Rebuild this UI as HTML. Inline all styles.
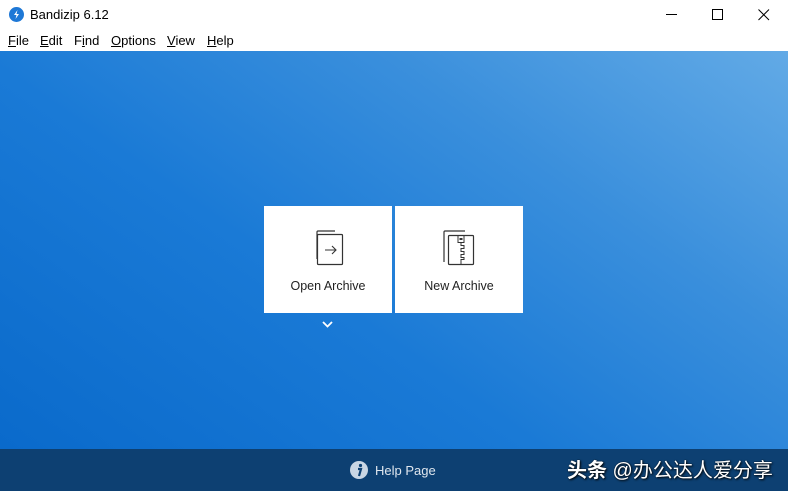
<!DOCTYPE html>
<html><head><meta charset="utf-8"><style>
*{margin:0;padding:0;box-sizing:border-box}
body{width:788px;height:491px;overflow:hidden;font-family:"Liberation Sans","Noto Sans CJK SC",sans-serif;position:relative;background:#fff}
.title{position:absolute;left:0;top:0;width:788px;height:30px;background:#fff;font-size:13px;color:#000}
.title .t{position:absolute;left:30px;top:7px}
.menu{position:absolute;left:0;top:30px;height:21px;width:788px;font-size:13px;color:#000}
.menu span{position:absolute;top:3px}
.menu u{text-decoration:underline}
.main{position:absolute;left:0;top:51px;width:788px;height:398px;background:linear-gradient(215deg,#62aae6 0%,#3a8fdc 30%,#1a7ad6 60%,#0a6acb 100%)}
.card{position:absolute;top:206px;width:128px;height:107px;background:#fff;text-align:center;font-size:12.5px;color:#222}
.card .l{position:absolute;left:0;right:0;top:73px}
.bar{position:absolute;left:0;top:449px;width:788px;height:42px;background:#0d4072;color:#dfe6ee}
</style></head><body>
<div class="title">
<svg style="position:absolute;left:9px;top:7px" width="15" height="15" viewBox="0 0 15 15"><circle cx="7.5" cy="7.5" r="7.5" fill="#1e78d6"/><path d="M8.5 3 L5 8 H7.5 L6.5 12 L10 7 H7.5 Z" fill="#fff"/></svg>
<span class="t">Bandizip 6.12</span>
<svg style="position:absolute;left:666px;top:14px" width="12" height="2"><rect width="11" height="1" fill="#000"/></svg>
<svg style="position:absolute;left:712px;top:9px" width="11" height="11"><rect x="0.5" y="0.5" width="10" height="10" fill="none" stroke="#000"/></svg>
<svg style="position:absolute;left:758px;top:9px" width="12" height="12"><path d="M0.5 0.5L11 11M11 0.5L0.5 11" stroke="#000"/></svg>
</div>
<div class="menu">
<span style="left:8px"><u>F</u>ile</span>
<span style="left:40px"><u>E</u>dit</span>
<span style="left:74px">F<u>i</u>nd</span>
<span style="left:111px"><u>O</u>ptions</span>
<span style="left:167px"><u>V</u>iew</span>
<span style="left:207px"><u>H</u>elp</span>
</div>
<div class="main"></div>
<div class="card" style="left:264px">
<svg style="position:absolute;left:48px;top:23px" width="34" height="38" viewBox="0 0 34 38"><path d="M5 30V3q0-1 1-1h17" fill="none" stroke="#333" stroke-width="1.2"/><rect x="5.5" y="5.5" width="25" height="30" rx="1" fill="#fff" stroke="#333" stroke-width="1.2"/><path d="M13 21h11M20 17l4 4-4 4" fill="none" stroke="#333" stroke-width="1.1"/></svg>
<div class="l">Open Archive</div></div>
<div class="card" style="left:395px">
<svg style="position:absolute;left:48px;top:23px" width="34" height="38" viewBox="0 0 34 38"><path d="M1 33V3q0-1 1-1h20" fill="none" stroke="#333" stroke-width="1.2"/><rect x="5.5" y="6.5" width="25" height="29" rx="1" fill="#fff" stroke="#333" stroke-width="1.2"/><rect x="15" y="6.5" width="6" height="7" fill="none" stroke="#333" stroke-width="1"/><rect x="16.5" y="9" width="3" height="2" fill="#333"/><path d="M18 13.5v3h3v3h-3v3h3v3h-3v3h3v2h-3v5" fill="none" stroke="#333" stroke-width="1"/></svg>
<div class="l">New Archive</div></div>
<svg style="position:absolute;left:322px;top:321px" width="11" height="8"><path d="M1 1l4.5 4.5L10 1" fill="none" stroke="#fff" stroke-width="1.8"/></svg>
<div class="bar">
<svg style="position:absolute;left:350px;top:12px" width="18" height="18"><circle cx="9" cy="9" r="9" fill="#c9d6e4"/><circle cx="10.5" cy="4.5" r="1.6" fill="#0d4072"/><path d="M8 8h3l-2 7" stroke="#0d4072" stroke-width="2.2" fill="none"/></svg>
<span style="position:absolute;left:375px;top:14px;font-size:13px">Help Page</span>
<span style="position:absolute;left:567px;top:5px;font-size:20px;color:#fff;text-shadow:1px 1px 2px #000,0 0 1px #000"><b>头条</b> @办公达人爱分享</span>
</div>
</body></html>
